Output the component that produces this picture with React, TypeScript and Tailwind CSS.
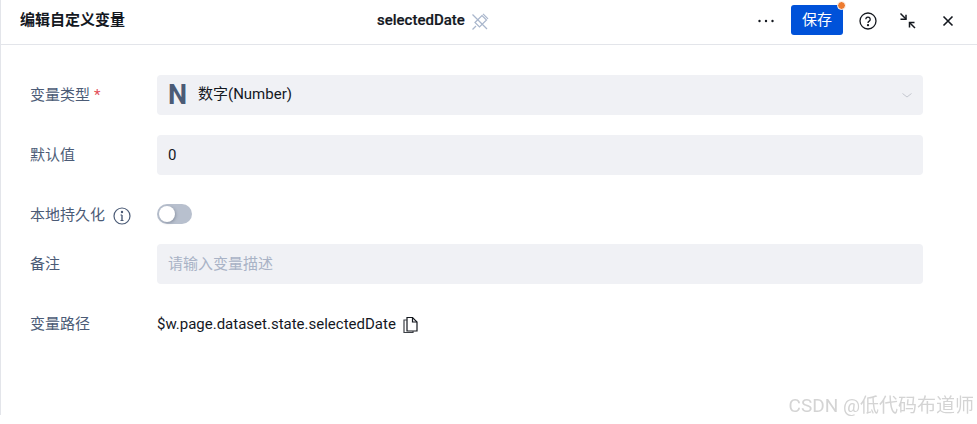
import React from "react";

const font = { fontFamily: '"Roboto","Noto Sans CJK SC",sans-serif' };

function Label({ children }: { children: React.ReactNode }) {
  return <div className="w-[127px] shrink-0 flex items-center text-[15px] text-[#4b5b76]">{children}</div>;
}

export default function App() {
  return (
    <div className="relative w-[977px] h-[424px] bg-white overflow-hidden font-['Roboto','Noto_Sans_CJK_SC',sans-serif]">
      <div className="h-[415px] border-l border-[#e3e5ea] flex flex-col">
        <header className="h-[45px] shrink-0 border-b border-[#e3e5ea] flex items-center pl-[19px] pr-[23px]">
          <div className="w-[341px] pb-[3px] text-[15px] font-bold text-[#14181f]">编辑自定义变量</div>
          <div className="flex-1 flex items-center gap-[6px] pl-[16px] pb-[3px]">
            <span className="text-[15px] font-medium text-[#14181f] [-webkit-text-stroke:0.2px_#14181f]">selectedDate</span>
            <svg width="18" height="18" viewBox="0 0 18 18" fill="none" stroke="#a9b6cc" strokeWidth="1.2" className="mt-[2px]">
              <path d="M1.5 1.5 16 16" />
              <path d="M5 13 1.5 16.5" />
              <path d="M4 9.5 11 2.5l4.5 4.5L8.5 14Z" />
              <path d="M12 .8l5 5" />
            </svg>
          </div>
          <div className="flex items-center">
            <svg width="18" height="4" viewBox="0 0 18 4" fill="#14181f" className="mr-[16px] mb-[3px]">
              <circle cx="2.5" cy="2" r="1.2" /><circle cx="9" cy="2" r="1.2" /><circle cx="15.5" cy="2" r="1.2" />
            </svg>
            <button className="relative w-[52px] h-[30px] mb-[4px] rounded-[3px] bg-[#0052d9] text-white text-[15px]">
              保存
              <span className="absolute -top-[3px] -right-[2px] w-[7px] h-[7px] rounded-full bg-[#ed7b2f] border border-white box-content -m-px" />
            </button>
            <svg width="18" height="18" viewBox="0 0 18 18" fill="none" stroke="#14181f" strokeWidth="1.3" className="ml-[16px] mb-[3px]">
              <circle cx="9" cy="9" r="8" />
              <path d="M6.8 7.2a2.2 2.2 0 1 1 3.4 1.9c-.8.5-1.2 1-1.2 1.9" />
              <circle cx="9" cy="13.2" r=".5" fill="#14181f" />
            </svg>
            <svg width="18" height="18" viewBox="0 0 18 18" fill="none" stroke="#14181f" strokeWidth="1.5" className="ml-[22px] mb-[3px]">
              <path d="M1.5 1.5 7 7" /><path d="M1.5 7.3H7V2.8" />
              <path d="M16 16 10.5 10.5" /><path d="M10.5 15.5V10.5H15.5" />
            </svg>
            <svg width="12" height="12" viewBox="0 0 12 12" fill="none" stroke="#14181f" strokeWidth="1.6" className="ml-[25px] mb-[3px]">
              <path d="M1.5 1.5 10.5 10.5M10.5 1.5 1.5 10.5" />
            </svg>
          </div>
        </header>

        <main className="flex-1 pl-[29px] pr-[54px] pt-[30px] flex flex-col">
          <div className="flex h-[40px]">
            <Label>变量类型<span className="ml-[4px] text-[#e34d59]">*</span></Label>
            <div className="flex-1 rounded-[4px] bg-[#f0f1f5] flex items-center pl-[11px] pr-[10px]">
              <span className="w-[30px] text-[27px] leading-none font-bold text-[#4b5b76]">N</span>
              <span className="text-[15px] pb-[2px] text-[#14181f]">数字(Number)</span>
              <svg width="12" height="12" viewBox="0 0 12 12" fill="none" stroke="#c5c8d0" strokeWidth="1" className="ml-auto">
                <path d="M1.5 4.5 6 8l4.5-3.5" />
              </svg>
            </div>
          </div>
          <div className="flex h-[40px] mt-[20px]">
            <Label>默认值</Label>
            <div className="flex-1 rounded-[4px] bg-[#f0f1f5] flex items-center pl-[11px] text-[15px] text-[#14181f]">0</div>
          </div>
          <div className="flex h-[20px] mt-[30px]">
            <Label>
              本地持久化
              <svg width="18" height="18" viewBox="0 0 18 18" fill="none" stroke="#4b5b76" strokeWidth="1.2" className="ml-[8px] mt-[2px]">
                <circle cx="9" cy="9" r="8" />
                <path d="M9 8v5.5" strokeWidth="1.4" />
                <path d="M7.5 8H9M7.5 13.5h3" />
                <circle cx="9" cy="5" r=".6" fill="#4b5b76" />
              </svg>
            </Label>
            <div className="relative w-[35px] h-[20px] -mt-px rounded-full bg-[#b8c0ce]">
              <span className="absolute left-[2px] top-[2px] w-[16px] h-[16px] rounded-full bg-white shadow-[1px_1px_3px_rgba(60,70,90,0.35)]" />
            </div>
          </div>
          <div className="flex h-[40px] mt-[19px]">
            <Label>备注</Label>
            <div className="flex-1 rounded-[4px] bg-[#f0f1f5] flex items-center pl-[11px] text-[15px] text-[#a9b3c6]">请输入变量描述</div>
          </div>
          <div className="flex h-[40px] mt-[20px]">
            <Label>变量路径</Label>
            <div className="flex items-center text-[15px] text-[#14181f]">
              $w.page.dataset.state.selectedDate
              <svg width="17" height="18" viewBox="0 0 17 18" fill="none" stroke="#14181f" strokeWidth="1.2" className="ml-[6px] mt-[1px]">
                <path d="M5 1.5h5.5L15 6v9H5Z" />
                <path d="M10.5 1.5V6H15" />
                <path d="M5 4H2v12.5h9V15" stroke="#3c4046" />
              </svg>
            </div>
          </div>
        </main>
      </div>
      <div className="absolute right-[3px] bottom-[5px] text-[19px] leading-[26px] text-[#d4d4d4] blur-[0.5px]" style={font}>
        CSDN @低代码布道师
      </div>
    </div>
  );
}
